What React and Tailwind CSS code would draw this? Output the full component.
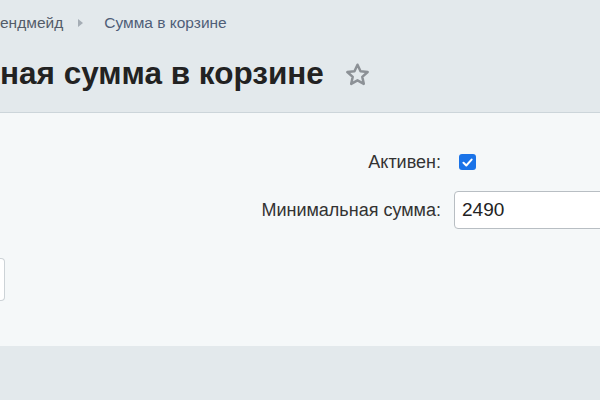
import { useState } from "react"

const Star = () => (
  <svg width="27" height="26" viewBox="0 0 24 24" fill="none" stroke="#8c9196" strokeWidth="2.3" strokeLinejoin="round">
    <path d="M12 2.5l2.8 6 6.6.7-5 4.5 1.4 6.5L12 16.9l-5.8 3.3 1.4-6.5-5-4.5 6.6-.7z" />
  </svg>
)

const App = () => {
  const [activo, setActivo] = useState(true)
  const [suma, setSuma] = useState("2490")

  return (
    <div className="w-[600px] h-[400px] overflow-hidden bg-[#e3e9ec] font-['Liberation_Sans',Arial,sans-serif]">
      {/* migas de pan */}
      <div className="h-[46px] flex items-center text-[15.5px] text-[#535c69]">
        <span>ендмейд</span>
        <span className="ml-[15px] w-0 h-0 border-y-[4px] border-y-transparent border-l-[5px] border-l-[#a5adb5]"></span>
        <span className="ml-[21px] text-[#4f5e78]">Сумма в корзине</span>
      </div>

      <div className="h-[66px] flex items-start pt-[7px]">
        <h1 className="text-[31.5px] leading-[40px] font-bold text-[#222]">ная сумма в корзине</h1>
        <span className="ml-[20px] mt-[9px]"><Star /></span>
      </div>

      {/* formulario */}
      <div className="h-[234px] bg-[#f5f8f9] border-t border-[#ccd5da] pt-[36px]">
        <div className="grid grid-cols-[441px_1fr] gap-x-[13px] gap-y-[16px] text-[18px] text-[#333]">
          <label className="text-right leading-[26px] self-center" htmlFor="activo">Активен:</label>
          <div className="flex items-center h-[26px]">
            <button
              id="activo"
              onClick={() => setActivo(!activo)}
              className={`ml-[5px] w-[17px] h-[16px] rounded-[3px] flex items-center justify-center ${activo ? "bg-[#1a73e8]" : "bg-white border border-[#999]"}`}
            >
              {activo && (
                <svg width="11" height="9" viewBox="0 0 11 9" fill="none" stroke="white" strokeWidth="2" strokeLinecap="round" strokeLinejoin="round">
                  <path d="M1.5 4.8l2.8 2.7L9.6 1.6" />
                </svg>
              )}
            </button>
          </div>

          <label className="text-right self-center" htmlFor="suma">Минимальная сумма:</label>
          <input
            id="suma"
            type="text"
            value={suma}
            onChange={e => setSuma(e.target.value)}
            className="w-[200px] h-[38px] px-[7px] bg-white border border-[#b8bec3] rounded-[4px] text-[19px] text-[#222] outline-none"
          />
        </div>

        <div className="mt-[29px] w-[5px] h-[43px] bg-white border border-l-0 border-[#cdd3d7] rounded-r-[4px]"></div>
      </div>
    </div>
  )
}

export default App
